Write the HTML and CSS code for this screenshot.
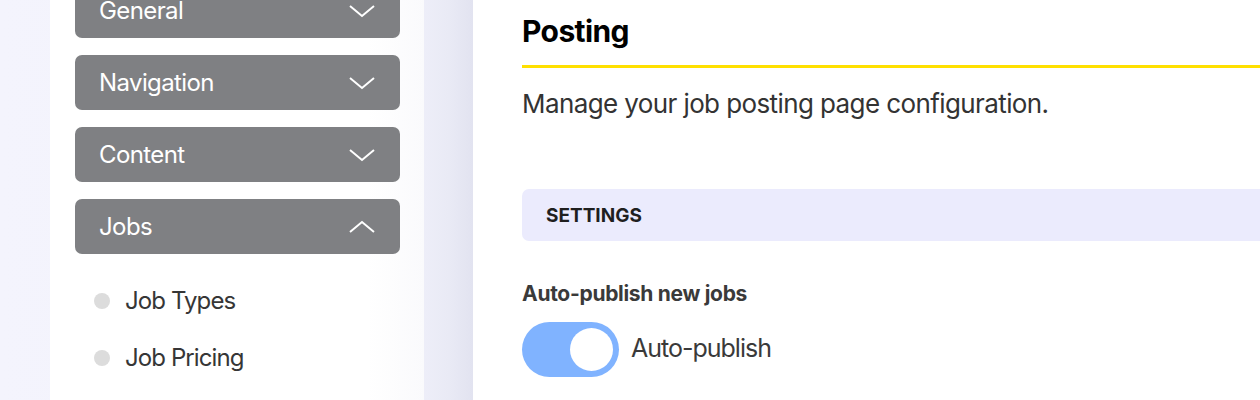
FILE: index.html
```html
<!DOCTYPE html>
<html lang="en">

<head>
    <meta charset="UTF-8">
    <meta name="viewport" content="width=device-width, initial-scale=1.0">
    <title>Posting Settings</title>
    <link rel="stylesheet" href="styles.css">
</head>

<body>
    <div class="layout">
        <!-- Sidebar -->
        <aside class="sidebar-wrap">
            <div class="sidebar">
                <div class="menu">
                    <div class="menu-btn">
                        <span>General</span>
                        <svg class="chevron" viewBox="0 0 26 14"><path d="M1 2 L13 12 L25 2" /></svg>
                    </div>
                    <div class="menu-btn">
                        <span>Navigation</span>
                        <svg class="chevron" viewBox="0 0 26 14"><path d="M1 2 L13 12 L25 2" /></svg>
                    </div>
                    <div class="menu-btn">
                        <span>Content</span>
                        <svg class="chevron" viewBox="0 0 26 14"><path d="M1 2 L13 12 L25 2" /></svg>
                    </div>
                    <div class="menu-btn">
                        <span>Jobs</span>
                        <svg class="chevron" viewBox="0 0 26 14"><path d="M1 12 L13 2 L25 12" /></svg>
                    </div>
                    <ul class="submenu">
                        <li><span class="dot"></span>Job Types</li>
                        <li><span class="dot"></span>Job Pricing</li>
                    </ul>
                </div>
            </div>
        </aside>

        <!-- Main content -->
        <main class="main">
            <h1>Posting</h1>
            <p class="desc">Manage your job posting page configuration.</p>

            <div class="section-bar">SETTINGS</div>

            <div class="field">
                <div class="field-label">Auto-publish new jobs</div>
                <label class="toggle-row">
                    <span class="toggle"><span class="knob"></span></span>
                    <span class="toggle-text">Auto-publish</span>
                </label>
            </div>
        </main>
    </div>
</body>

</html>
```

FILE: styles.css
```css
/* Base */
body {
    font-family: 'Inter', 'Liberation Sans', sans-serif;
    background-color: #f4f4fd;
    margin: 0;
    padding: 0;
    height: 400px;
    overflow: hidden;
}

.layout {
    display: flex;
    height: 400px;
}

/* Sidebar */
.sidebar-wrap {
    width: 473px;
    flex-shrink: 0;
    padding-left: 50px;
    box-sizing: border-box;
    background: linear-gradient(90deg, #f4f4fd 0%, #f1f1fb 85%, #e9eaf5 95%, #e2e3f0 100%);
}

.sidebar {
    display: flow-root;
    width: 374px;
    height: 100%;
    background: linear-gradient(90deg, #ffffff 85%, #fafafc 100%);
    padding: 0 24px 0 25px;
    box-sizing: border-box;
}

.menu {
    margin-top: -17px;
}

.menu-btn {
    display: flex;
    align-items: center;
    justify-content: space-between;
    height: 55px;
    margin-bottom: 17px;
    padding: 0 25px 0 24px;
    background-color: #7f8083;
    border-radius: 7px;
    color: #ffffff;
    font-size: 24px;
    letter-spacing: -0.6px;
}

.chevron {
    width: 26px;
    height: 14px;
    fill: none;
    stroke: #ffffff;
    stroke-width: 2;
}

.submenu {
    list-style: none;
    margin: 0;
    padding: 1px 0 0 19px;
}

.submenu li {
    display: flex;
    align-items: center;
    gap: 15px;
    height: 57px;
    font-size: 24px;
    color: #363636;
    letter-spacing: -0.9px;
}

.dot {
    width: 16px;
    height: 16px;
    border-radius: 50%;
    background-color: #dcdcdc;
}

/* Main */
.main {
    flex: 1;
    background-color: #ffffff;
    padding-left: 49px;
}

h1 {
    margin: 0;
    padding-top: 13px;
    height: 52px;
    box-sizing: content-box;
    border-bottom: 3px solid #ffe000;
    font-size: 30px;
    line-height: 36px;
    font-weight: 700;
    color: #000000;
    letter-spacing: -0.6px;
}

.desc {
    margin: 20px 0 0;
    font-size: 26px;
    line-height: 32px;
    color: #333333;
    letter-spacing: -0.6px;
}

.section-bar {
    margin-top: 69px;
    height: 52px;
    display: flex;
    align-items: center;
    padding-left: 24px;
    background-color: #ebebfd;
    border-radius: 7px 0 0 7px;
    font-size: 19px;
    font-weight: 700;
    color: #1f1f1f;
    letter-spacing: 0;
}

.field {
    margin-top: 41px;
}

.field-label {
    font-size: 21px;
    line-height: 24px;
    font-weight: 700;
    color: #3a3a3a;
    letter-spacing: -0.3px;
}

.toggle-row {
    display: flex;
    align-items: center;
    gap: 12px;
    margin-top: 16px;
}

.toggle {
    display: flex;
    justify-content: flex-end;
    width: 97px;
    height: 55px;
    padding: 6px;
    box-sizing: border-box;
    border-radius: 28px;
    background-color: #80b3ff;
}

.knob {
    width: 43px;
    height: 43px;
    border-radius: 50%;
    background-color: #ffffff;
}

.toggle-text {
    font-size: 25px;
    color: #3a3a3a;
    letter-spacing: -1px;
    padding-bottom: 3px;
}
```
